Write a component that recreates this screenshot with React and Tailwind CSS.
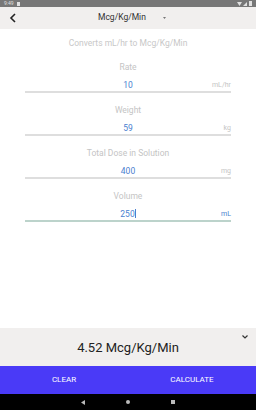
import React from "react";

function Field({ label, value, unit, active }) {
  return (
    <div className="flex flex-col items-center">
      <div className="h-[10px] flex items-center justify-center text-[8.5px] text-[#c4c4c4] leading-none">{label}</div>
      <div className={"relative w-[206px] h-[14px] mt-[7px] border-b-[2px] " + (active ? "border-[#bcd3cb]" : "border-[#dedede]")}>
        <div className="absolute inset-x-0 top-[2px] text-center text-[8.5px] text-[#4a7fd0] leading-none">
          {value}
          {active && <span className="inline-block w-[1px] h-[9px] bg-[#4a7fd0] align-middle -mt-[2px]" />}
        </div>
        <div className={"absolute right-0 top-[3px] text-[7px] leading-none " + (active ? "text-[#4a7fd0]" : "text-[#c4c4c4]")}>{unit}</div>
      </div>
    </div>
  );
}

export default function App() {
  return (
    <div className="w-[256px] h-[410px] flex flex-col bg-white overflow-hidden" style={{ fontFamily: "Roboto, 'Liberation Sans', sans-serif" }}>
      <div className="h-[7px] bg-[#777777] flex items-center justify-between px-[4px]">
        <div className="flex items-center gap-[3px]">
          <span className="text-[5px] text-[#e0e0e0] leading-none">9:49</span>
          <span className="w-[3px] h-[4px] bg-[#e0e0e0]" />
        </div>
        <div className="flex items-center gap-[1px]">
          <svg width="5" height="4" viewBox="0 0 10 8"><path d="M0 0 L10 0 L5 8 Z" fill="#e0e0e0" /></svg>
          <svg width="4" height="4" viewBox="0 0 8 8"><path d="M8 0 L8 8 L0 8 Z" fill="#e0e0e0" /></svg>
          <span className="w-[3px] h-[5px] bg-[#e0e0e0] ml-[1px]" />
        </div>
      </div>
      <div className="h-[22px] bg-[#f1efee] flex items-center relative">
        <svg className="absolute left-[9px] top-[6px]" width="8" height="10" viewBox="0 0 8 10">
          <path d="M6 1 L2 5 L6 9" fill="none" stroke="#222" strokeWidth="1.6" />
        </svg>
        <div className="absolute left-[98px] top-[6px] text-[8.5px] text-[#333] leading-none">Mcg/Kg/Min</div>
        <svg className="absolute left-[163px] top-[10px]" width="3" height="2" viewBox="0 0 6 4"><path d="M0 0 L6 0 L3 4 Z" fill="#777" /></svg>
      </div>
      <div className="flex-1 flex flex-col items-center">
        <div className="mt-[9px] text-[8.5px] text-[#c8c8c8] leading-none h-[10px] flex items-center">Converts mL/hr to Mcg/Kg/Min</div>
        <div className="mt-[14px] flex flex-col gap-[12px]">
          <Field label="Rate" value="10" unit="mL/hr" />
          <Field label="Weight" value="59" unit="kg" />
          <Field label="Total Dose in Solution" value="400" unit="mg" />
          <Field label="Volume" value="250" unit="mL" active />
        </div>
      </div>
      <div className="h-[38px] bg-[#f1efee] relative flex items-center justify-center">
        <span className="text-[13px] text-[#222] leading-none mt-[1px]">4.52 Mcg/Kg/Min</span>
        <svg className="absolute right-[8px] top-[7px]" width="6" height="4" viewBox="0 0 6 4"><path d="M0.5 0.5 L3 3 L5.5 0.5" fill="none" stroke="#333" strokeWidth="1.2" /></svg>
      </div>
      <div className="h-[28px] bg-[#4a3af7] flex">
        <div className="flex-1 flex items-center justify-center text-[8px] text-white leading-none">CLEAR</div>
        <div className="flex-1 flex items-center justify-center text-[8px] text-white leading-none">CALCULATE</div>
      </div>
      <div className="h-[16px] bg-black flex items-center justify-center gap-[41px]">
        <svg width="4" height="5" viewBox="0 0 4 5"><path d="M4 0 L0 2.5 L4 5 Z" fill="#bbb" /></svg>
        <span className="w-[4px] h-[4px] rounded-full bg-[#bbb]" />
        <span className="w-[4px] h-[4px] bg-[#bbb]" />
      </div>
    </div>
  );
}
